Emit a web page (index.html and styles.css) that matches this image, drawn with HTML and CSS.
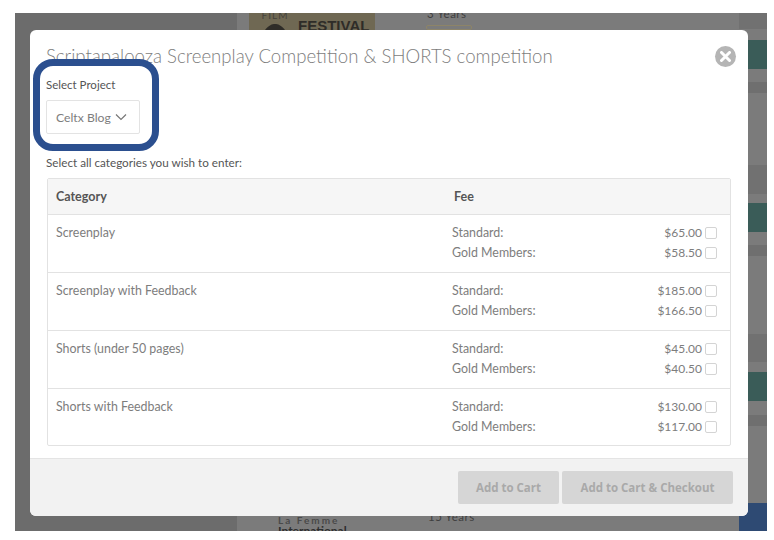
FILE: index.html
```html
<!DOCTYPE html>
<html lang="en">

<head>
    <meta charset="UTF-8">
    <meta name="viewport" content="width=device-width, initial-scale=1.0">
    <title>Scriptapalooza Screenplay Competition</title>
    <link rel="stylesheet" href="styles.css">
</head>

<body>
    <div class="backdrop">
        <div class="page-side"></div>
        <div class="page-main">
            <div class="listing">
                <div class="poster">
                    <div class="poster-film">
                        <span>FILM</span>
                        <svg width="20" height="6" viewBox="0 0 20 6">
                            <path d="M0 6C4 1 7 0 10 0s6 1 10 6z" fill="#2e2c28" />
                        </svg>
                    </div>
                    <span class="poster-title">FESTIVAL</span>
                </div>
                <div class="years">
                    <span class="years-text">3 Years</span>
                    <span class="years-btn"></span>
                </div>
            </div>
            <div class="listing listing-bottom">
                <div class="intl">
                    <div class="intl-top">La Femme</div>
                    <div>International</div>
                </div>
                <div class="years">
                    <span class="years-text">15 Years</span>
                    <span class="years-btn"></span>
                </div>
            </div>
        </div>
        <div class="page-strip">
            <div class="band dark h16"></div>
            <div class="band h11"></div>
            <div class="band teal h29"></div>
            <div class="band h13"></div>
            <div class="band dim h11"></div>
            <div class="band h72"></div>
            <div class="band dark h29"></div>
            <div class="band h9"></div>
            <div class="band teal h29"></div>
            <div class="band h13"></div>
            <div class="band dim h11"></div>
            <div class="band h78"></div>
            <div class="band dark h28"></div>
            <div class="band h10"></div>
            <div class="band teal h29"></div>
            <div class="band h14"></div>
            <div class="band dim h11"></div>
            <div class="band h77"></div>
            <div class="band blue h28"></div>
        </div>

        <div class="modal">
            <div class="modal-body">
                <div class="modal-head">
                    <h1>Scriptapalooza Screenplay Competition &amp; SHORTS competition</h1>
                    <span class="close">
                        <svg width="11" height="11" viewBox="0 0 11 11">
                            <path d="M1.5 1.5l8 8M9.5 1.5l-8 8" stroke="#fff" stroke-width="3" stroke-linecap="round" />
                        </svg>
                    </span>
                </div>

                <label class="field-label">Select Project</label>
                <div class="select">
                    <span>Celtx Blog</span>
                    <svg width="12" height="8" viewBox="0 0 12 8">
                        <path d="M1 1.5l5 5 5-5" fill="none" stroke="#777" stroke-width="1.2" />
                    </svg>
                </div>

                <p class="hint">Select all categories you wish to enter:</p>

                <div class="fee-table">
                    <div class="fee-row fee-head">
                        <div>Category</div>
                        <div class="fee-col fee-title">Fee</div>
                    </div>
                    <div class="fee-row">
                        <div>Screenplay</div>
                        <div class="fee-col">
                            <div class="fee-line"><span>Standard:</span><span class="price">$65.00</span><span class="check"></span></div>
                            <div class="fee-line"><span>Gold Members:</span><span class="price">$58.50</span><span class="check"></span></div>
                        </div>
                    </div>
                    <div class="fee-row">
                        <div>Screenplay with Feedback</div>
                        <div class="fee-col">
                            <div class="fee-line"><span>Standard:</span><span class="price">$185.00</span><span class="check"></span></div>
                            <div class="fee-line"><span>Gold Members:</span><span class="price">$166.50</span><span class="check"></span></div>
                        </div>
                    </div>
                    <div class="fee-row">
                        <div>Shorts (under 50 pages)</div>
                        <div class="fee-col">
                            <div class="fee-line"><span>Standard:</span><span class="price">$45.00</span><span class="check"></span></div>
                            <div class="fee-line"><span>Gold Members:</span><span class="price">$40.50</span><span class="check"></span></div>
                        </div>
                    </div>
                    <div class="fee-row">
                        <div>Shorts with Feedback</div>
                        <div class="fee-col">
                            <div class="fee-line"><span>Standard:</span><span class="price">$130.00</span><span class="check"></span></div>
                            <div class="fee-line"><span>Gold Members:</span><span class="price">$117.00</span><span class="check"></span></div>
                        </div>
                    </div>
                </div>
            </div>

            <div class="modal-foot">
                <button class="button btn-cart">Add to Cart</button>
                <button class="button btn-checkout">Add to Cart &amp; Checkout</button>
            </div>

            <div class="callout"></div>
        </div>
    </div>
</body>

</html>
```

FILE: styles.css
```css
body {
    margin: 0;
    background-color: #fff;
    font-family: Lato, "Open Sans", sans-serif;
    color: #7d7d7d;
}

.backdrop {
    position: relative;
    display: flex;
    width: 752px;
    height: 518px;
    margin: 13px 0 0 15px;
    background-color: #7b7b7b;
    overflow: hidden;
}

.page-side {
    width: 222px;
    background-color: #6c6c6c;
}

.page-main {
    flex: 1;
    display: flex;
    flex-direction: column;
    justify-content: space-between;
}

.listing {
    display: flex;
    height: 17px;
    padding-left: 12px;
    overflow: hidden;
}

.listing-bottom {
    height: 15px;
    padding-left: 41px;
}

.poster {
    width: 126px;
    height: 17px;
    box-sizing: border-box;
    padding-left: 11px;
    background-color: #6f6853;
    color: #2e2c28;
    display: flex;
    gap: 6px;
}

.poster-film {
    display: flex;
    flex-direction: column;
    align-items: center;
    width: 30px;
    height: 17px;
    font-size: 10px;
    line-height: 8px;
    letter-spacing: 1px;
    color: #45433c;
}

.poster-film span {
    margin-top: -2px;
}

.poster-film svg {
    margin-top: 5px;
}

.poster-title {
    margin-top: 4px;
    margin-left: 2px;
    font-size: 15px;
    font-weight: 700;
    font-family: "Liberation Sans", sans-serif;
    line-height: 17px;
}

.intl {
    width: 147px;
    font-size: 12px;
    font-weight: 700;
    line-height: 10px;
    color: #2e2e2e;
}

.intl-top {
    margin-top: -1px;
    margin-bottom: 1px;
    font-size: 10px;
    letter-spacing: 2px;
    color: #4a4a4a;
}

.years {
    display: flex;
    flex-direction: column;
    margin-left: 52px;
}

.years-text {
    height: 12px;
    margin-top: -5px;
    font-size: 11.5px;
    letter-spacing: 0.5px;
    line-height: 12px;
    color: #3f3f3f;
}

.listing-bottom .years {
    margin-left: 0;
    padding-left: 3px;
}

.listing-bottom .years-text {
    margin-top: -5px;
    margin-bottom: 4px;
}

.years-btn {
    box-sizing: border-box;
    width: 46px;
    height: 12px;
    margin-top: 5px;
    margin-left: -1px;
    border: 1px solid #8d8468;
    border-radius: 2px;
}

.page-strip {
    width: 28px;
    display: flex;
    flex-direction: column;
}

.band.dark {
    background-color: #717171;
}

.band.dim {
    background-color: #6f6f6f;
}

.band.teal {
    background-color: #3a5c58;
}

.band.blue {
    background-color: #2e4a73;
}

.h9 { height: 9px; }
.h10 { height: 10px; }
.h11 { height: 11px; }
.h13 { height: 13px; }
.h14 { height: 14px; }
.h16 { height: 16px; }
.h28 { height: 28px; }
.h29 { height: 29px; }
.h72 { height: 72px; }
.h77 { height: 77px; }
.h78 { height: 78px; }

.modal {
    position: absolute;
    left: 15px;
    top: 17px;
    width: 718px;
    height: 486px;
    background-color: #fff;
    border-radius: 6px;
    display: flex;
    flex-direction: column;
    overflow: hidden;
}

.modal-body {
    flex: 1;
    padding: 15px 17px 0 16px;
}

.modal-head {
    display: flex;
    justify-content: space-between;
    align-items: center;
    height: 22px;
}

.modal-head h1 {
    margin: 0;
    font-size: 18.6px;
    font-weight: 300;
    color: #7d7d7d;
}

.close {
    width: 21px;
    height: 21px;
    margin-right: -5px;
    border-radius: 50%;
    background-color: #b5b5b5;
    display: flex;
    align-items: center;
    justify-content: center;
}

.field-label {
    display: block;
    margin-top: 10px;
    font-size: 11.5px;
    line-height: 16px;
    color: #555;
}

.select {
    display: flex;
    align-items: center;
    justify-content: space-between;
    box-sizing: border-box;
    width: 94px;
    height: 34px;
    margin-top: 7px;
    padding: 0 12px 0 9px;
    border: 1px solid #e3e3e3;
    border-radius: 2px;
    font-size: 12.2px;
}

.hint {
    margin: 20px 0 8px;
    font-size: 11.7px;
    line-height: 16px;
    color: #555;
}

.fee-table {
    box-sizing: border-box;
    height: 268px;
    margin-left: 1px;
    border: 1px solid #e2e2e2;
    border-radius: 2px;
}

.fee-row {
    display: grid;
    grid-template-columns: 396px 1fr;
    box-sizing: border-box;
    height: 58px;
    padding: 8px 13px 0 8px;
    border-top: 1px solid #e2e2e2;
    font-size: 12.4px;
    line-height: 20px;
}

.fee-head {
    height: 35px;
    padding-top: 8px;
    border-top: 0;
    background-color: #f6f6f6;
    font-weight: 700;
    font-size: 12.5px;
    color: #555;
}

.fee-col {
    min-width: 0;
}

.fee-title {
    padding-left: 2px;
}

.fee-line {
    display: flex;
    align-items: center;
}

.price {
    margin-left: auto;
    font-size: 12px;
}

.check {
    box-sizing: border-box;
    width: 12px;
    height: 12px;
    margin-left: 3px;
    border: 1px solid #d4d4d4;
    border-radius: 2px;
}

.modal-foot {
    display: flex;
    justify-content: flex-end;
    gap: 3px;
    box-sizing: border-box;
    height: 58px;
    padding: 12px 15px 0 0;
    border-top: 1px solid #e4e4e4;
    background-color: #f2f2f2;
}

.button {
    height: 33px;
    border: none;
    border-radius: 2px;
    background-color: #d6d6d6;
    color: #a9a9a9;
    font-family: "Open Sans", sans-serif;
    font-size: 11.5px;
    font-weight: 700;
}

.btn-cart {
    width: 101px;
}

.btn-checkout {
    width: 171px;
}

/* annotation drawn over the screenshot */
.callout {
    position: absolute;
    left: 3px;
    top: 29px;
    box-sizing: border-box;
    width: 126px;
    height: 92px;
    border: 7px solid #2b4f8f;
    border-radius: 20px;
}
```
